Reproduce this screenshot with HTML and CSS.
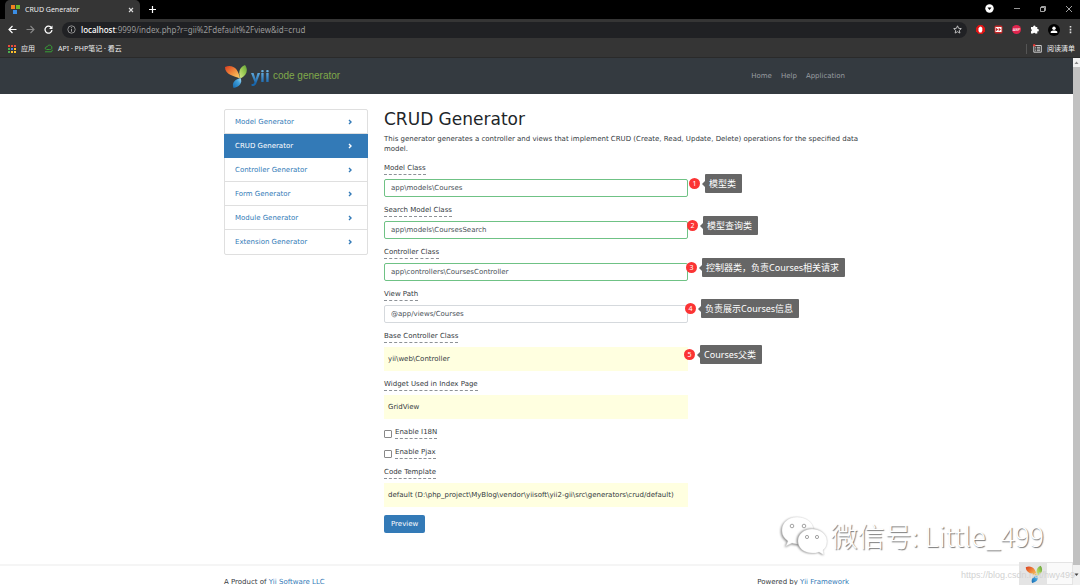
FILE: index.html
```
<!DOCTYPE html>
<html lang="zh-CN">
<head>
<meta charset="utf-8">
<title>CRUD Generator</title>
<link rel="stylesheet" href="styles.css">
</head>
<body>
<svg class="defs" aria-hidden="true">
  <defs>
    <linearGradient id="red" x1="0" y1="0" x2="1" y2="1"><stop offset="0" stop-color="#d93b1f"/><stop offset=".5" stop-color="#f08a3c"/><stop offset="1" stop-color="#fbd56b"/></linearGradient>
    <linearGradient id="green" x1="1" y1="0" x2="0" y2="1"><stop offset="0" stop-color="#5f9e35"/><stop offset=".5" stop-color="#9ccb55"/><stop offset="1" stop-color="#d8e88c"/></linearGradient>
    <linearGradient id="blue" x1="0" y1="1" x2="1" y2="0"><stop offset="0" stop-color="#1468ad"/><stop offset=".6" stop-color="#3f9fdb"/><stop offset="1" stop-color="#b5e2f5"/></linearGradient>
    <symbol id="leaf" viewBox="0 0 24 24">
      <path fill="url(#red)" d="M1 3C5 1 10 2 12.500 5.500c2 3 3 6 3.500 9C10 12 1 11 1 3z"/>
      <path fill="url(#green)" d="M21 1c3.500 5 2 10-4.500 13.500C14.500 10 14.500 3.500 21 1z"/>
      <path fill="url(#blue)" d="M16.500 14c2.500 5-1.500 9-7 10-2-5 1-8.500 7-10z"/>
    </symbol>
  </defs>
</svg>

<header class="browser">
  <div class="tabstrip">
    <div class="tab">
      <svg class="icon-sm" viewBox="0 0 9 9"><path fill="#f58220" d="M0 0h4v4H0z"/><path fill="#6fb92c" d="M5 0h4v4H5z"/><path fill="#3b8ee5" d="M2 5h4v4H2z"/></svg>
      <span class="tab-title">CRUD Generator</span>
      <button class="plain" aria-label="Close tab"><svg class="icon-xs" viewBox="0 0 6 6"><path d="M1 1l4 4M5 1L1 5" stroke="#ddd" stroke-width="1.1"/></svg></button>
    </div>
    <button class="plain new-tab" aria-label="New tab"><svg class="icon-sm" viewBox="0 0 9 9"><path d="M4.500 1v7M1 4.500h7" stroke="#fff" stroke-width="1.200"/></svg></button>
    <div class="window-buttons">
      <svg class="icon-sm" viewBox="0 0 9 9"><circle cx="4.500" cy="4.500" r="4.200" fill="#fff"/><path d="M2.500 3.500h4l-2 2.600z" fill="#000"/></svg>
      <button class="plain" aria-label="Minimize"><svg class="icon-xs" viewBox="0 0 6 6"><path d="M0 2.500h6" stroke="#bbb" stroke-width=".8"/></svg></button>
      <button class="plain" aria-label="Restore"><svg class="icon-xs" viewBox="0 0 6 6"><path d="M.5 1.500h4v4h-4zM1.500 1.500v-1h4v4h-1" fill="none" stroke="#ccc" stroke-width=".8"/></svg></button>
      <button class="plain" aria-label="Close"><svg class="icon-xs" viewBox="0 0 6 6"><path d="M0 0l6 6M6 0L0 6" stroke="#ccc" stroke-width=".8"/></svg></button>
    </div>
  </div>
  <div class="toolbar">
    <button class="plain" aria-label="Back"><svg class="icon-sm" viewBox="0 0 9 9"><path d="M8.500 4.500H1M4.500 1L1 4.500 4.500 8" fill="none" stroke="#fff" stroke-width="1.200"/></svg></button>
    <button class="plain" aria-label="Forward"><svg class="icon-sm" viewBox="0 0 9 9"><path d="M.5 4.500H8M4.500 1L8 4.500 4.500 8" fill="none" stroke="#888" stroke-width="1.100"/></svg></button>
    <button class="plain" aria-label="Reload"><svg class="icon-sm" viewBox="0 0 9 9"><path d="M7.500 2.800A3.500 3.500 0 1 0 8 5.200" fill="none" stroke="#fff" stroke-width="1.300"/><path d="M8.500.5v3.500H5z" fill="#fff"/></svg></button>
    <div class="address">
      <svg class="icon-sm" viewBox="0 0 9 9"><circle cx="4.500" cy="4.500" r="3.700" fill="none" stroke="#aaa" stroke-width=".8"/><path d="M4.500 4v2.700M4.500 2.200v1" stroke="#aaa" stroke-width=".9"/></svg>
      <span class="url"><b>localhost</b>:9999/index.php?r=gii%2Fdefault%2Fview&amp;id=crud</span>
      <svg class="icon-sm" viewBox="0 0 9 9"><path d="M4.500.8l1.100 2.500 2.700.3-2 1.800.6 2.700-2.400-1.400-2.400 1.400.6-2.700-2-1.800 2.700-.3z" fill="none" stroke="#ddd" stroke-width=".8"/></svg>
    </div>
    <div class="extensions">
      <svg class="icon-sm" viewBox="0 0 9 9"><path fill="#e11414" d="M2.700 0h3.600L9 2.700v3.600L6.300 9H2.700L0 6.300V2.700z"/><path fill="#fff" d="M2.500 3.500l1-1.500 1-.5 1 .5.800 1v2.500L5.500 7.500h-2L2.500 6z"/></svg>
      <svg class="icon-sm" viewBox="0 0 9 9"><rect x=".5" y=".5" width="8" height="8" rx="1.500" fill="#c62828"/><rect x="1.500" y="2" width="6" height="5" fill="#fff"/><path d="M2 2.800l2.300 1.700L2 6.200zM4.700 2.800L7 4.500 4.700 6.200z" fill="#c62828"/></svg>
      <span class="abp">ABP</span>
      <svg class="icon-sm" viewBox="0 0 9 9"><path fill="#fff" d="M1 2h2.200a1.200 1.200 0 1 1 2.300 0H7.300v2a1.200 1.200 0 1 1 0 2.300V8.500H5.200a1.100 1.100 0 0 0-2.100 0H1V6.200a1.100 1.100 0 0 0 0-2.100z"/></svg>
      <svg class="icon-md" viewBox="0 0 12 12"><circle cx="6" cy="6" r="6" fill="#000"/><circle cx="6" cy="4.200" r="1.700" fill="#fff"/><path fill="#fff" d="M2.700 9V8c0-2 6.600-2 6.600 0v1z"/></svg>
      <svg class="icon-dots" viewBox="0 0 3 9"><path fill="#ddd" d="M.7 1h1.600v1.600H.7zM.7 3.800h1.600v1.600H.7zM.7 6.600h1.600v1.600H.7z"/></svg>
    </div>
  </div>
  <nav class="bookmarks" aria-label="书签">
    <svg class="icon-sm" viewBox="0 0 9 9"><path fill="#e94b3c" d="M1 1h2v2H1zM4 1h2v2H4zM7 1h2v2H7z"/><path fill="#4caf50" d="M1 4h2v2H1z"/><path fill="#4285f4" d="M4 4h2v2H4z"/><path fill="#fbc02d" d="M7 4h2v2H7zM4 7h2v2H4zM7 7h2v2H7z"/><path fill="#4caf50" d="M1 7h2v2H1z"/></svg>
    <span class="apps">应用</span>
    <svg class="icon-sm" viewBox="0 0 9 9"><path d="M2.300 5.500C.5 5 1 2.700 3 3c.5-2.500 4.500-2.500 4.800 0 .6 2-1 2.800-2.300 2.500H2.500M1 7.800h6.500l1-2" fill="none" stroke="#38a038" stroke-width="1"/></svg>
    <span>API · PHP笔记 · 看云</span>
    <span class="reading">
      <svg class="icon-sm" viewBox="0 0 9 9"><path d="M.8 1.500h7.500v6.700H.8zM2.200 3.300h1M4 3.300h3M2.200 5h1M4 5h3M2.200 6.700h1M4 6.700h3" fill="none" stroke="#ddd" stroke-width=".9"/><circle cx="1.200" cy="1.200" r="1.200" fill="#e53935"/></svg>
      <span>阅读清单</span>
    </span>
  </nav>
</header>

<div class="viewport">
  <div class="page">
    <div class="navbar">
      <div class="container nav-inner">
        <div class="brand">
          <svg class="brand-leaf" viewBox="0 0 24 24"><use href="#leaf"/></svg>
          <span class="brand-yii">yii</span>
          <span class="brand-sub">code generator</span>
        </div>
        <nav class="menu"><a href="#">Home</a><a href="#">Help</a><a href="#">Application</a></nav>
      </div>
    </div>

    <div class="container content">
      <nav class="generators">
        <a href="#">Model Generator<svg viewBox="0 0 4 6"><path d="M1 1l2 2-2 2"/></svg></a>
        <a href="#" class="active">CRUD Generator<svg viewBox="0 0 4 6"><path d="M1 1l2 2-2 2"/></svg></a>
        <a href="#">Controller Generator<svg viewBox="0 0 4 6"><path d="M1 1l2 2-2 2"/></svg></a>
        <a href="#">Form Generator<svg viewBox="0 0 4 6"><path d="M1 1l2 2-2 2"/></svg></a>
        <a href="#">Module Generator<svg viewBox="0 0 4 6"><path d="M1 1l2 2-2 2"/></svg></a>
        <a href="#">Extension Generator<svg viewBox="0 0 4 6"><path d="M1 1l2 2-2 2"/></svg></a>
      </nav>

      <main class="main">
        <h1>CRUD Generator</h1>
        <p class="intro">This generator generates a controller and views that implement CRUD (Create, Read, Update, Delete) operations for the specified data model.</p>
        <form class="form">
          <div class="field">
            <label for="model">Model Class</label>
            <input id="model" class="text valid" type="text" value="app\models\Courses">
            <div class="note note-1"><span class="num">1</span><span class="tip">模型类</span></div>
          </div>
          <div class="field">
            <label for="search">Search Model Class</label>
            <input id="search" class="text valid" type="text" value="app\models\CoursesSearch">
            <div class="note note-2"><span class="num">2</span><span class="tip">模型查询类</span></div>
          </div>
          <div class="field">
            <label for="controller">Controller Class</label>
            <input id="controller" class="text valid" type="text" value="app\controllers\CoursesController">
            <div class="note note-3"><span class="num">3</span><span class="tip">控制器类，负责Courses相关请求</span></div>
          </div>
          <div class="field">
            <label for="views">View Path</label>
            <input id="views" class="text" type="text" value="@app/views/Courses">
            <div class="note note-4"><span class="num">4</span><span class="tip">负责展示Courses信息</span></div>
          </div>
          <div class="field">
            <label for="base">Base Controller Class</label>
            <output id="base" class="sticky">yii\web\Controller</output>
            <div class="note note-5"><span class="num">5</span><span class="tip">Courses父类</span></div>
          </div>
          <div class="field">
            <label for="widget">Widget Used in Index Page</label>
            <output id="widget" class="sticky">GridView</output>
          </div>
          <div class="check"><input id="i18n" type="checkbox"><label for="i18n">Enable I18N</label></div>
          <div class="check"><input id="pjax" type="checkbox"><label for="pjax">Enable Pjax</label></div>
          <div class="field">
            <label for="template">Code Template</label>
            <output id="template" class="sticky">default (D:\php_project\MyBlog\vendor\yiisoft\yii2-gii\src\generators\crud/default)</output>
          </div>
          <button type="button" class="preview">Preview</button>
        </form>
      </main>
    </div>

    <footer class="footer">
      <div class="container footer-inner">
        <span>A Product of <a href="#">Yii Software LLC</a></span>
        <span>Powered by <a href="#">Yii Framework</a></span>
      </div>
    </footer>

    <div class="debug"><span class="debug-logo"><svg viewBox="0 0 24 24"><use href="#leaf"/></svg></span></div>
    <div class="wechat">
      <svg viewBox="0 0 46 40">
        <g fill="#fff" stroke="#ddd" stroke-width=".4">
          <path class="bubble" d="M16 1C7 1 1 7 1 14c0 5 2 8 6 11l-2 5 6-3c3 1 6 1 9 1 9 0 14-7 13-14C32 6 25 1 16 1z"/>
          <path class="bubble front" d="M31 13c-8 0-14 5-14 12s6 12 14 12c3 0 5 0 7-1l5 3-1-5c3-2 4-5 4-9 0-7-7-12-15-12z"/>
        </g>
        <g fill="#fff" stroke="#999" stroke-width=".9"><circle cx="11" cy="10" r="1.800"/><circle cx="23" cy="10" r="1.800"/><circle cx="26" cy="21" r="1.600"/><circle cx="36" cy="21" r="1.600"/></g>
      </svg>
      <span>微信号: Little_499</span>
    </div>
    <div class="blog-mark">https://blog.csdn.net/hwy499</div>
  </div>
  <div class="scrollbar" aria-hidden="true">
    <svg viewBox="0 0 7 9"><path d="M1.500 6h4l-2-2.500z" fill="#888"/></svg>
    <div class="thumb"></div>
    <svg class="down" viewBox="0 0 7 9"><path d="M1.500 3.500h4l-2 2.500z" fill="#444"/></svg>
  </div>
</div>
</body>
</html>
```

FILE: styles.css
```
* { box-sizing: border-box; }

body {
  margin: 0;
  height: 100vh;
  display: flex;
  flex-direction: column;
  overflow: hidden;
  background: #fff;
  color: #343a40;
  font: 7px/10px "DejaVu Sans", "Noto Sans CJK SC", sans-serif;
}

a { color: #337ab7; text-decoration: none; }
svg { display: block; flex: none; }
.defs { position: absolute; width: 0; height: 0; }
.plain { padding: 0; border: 0; background: none; display: flex; }
.icon-xs { width: 6px; height: 6px; }
.icon-sm { width: 9px; height: 9px; }
.icon-md { width: 12px; height: 12px; }
.icon-dots { width: 3px; height: 9px; }

/* Browser frame */
.browser {
  background: #353535;
  color: #eee;
  font-family: "Noto Sans", "Noto Sans CJK SC", sans-serif;
  border-bottom: 1px solid #2a2a2a;
}
.tabstrip { display: flex; height: 19px; background: #000; align-items: center; }
.tab {
  display: flex;
  align-items: center;
  gap: 5px;
  width: 135px;
  height: 19px;
  margin-left: 5px;
  padding: 0 6px;
  border-radius: 5px 5px 0 0;
  background: #353535;
}
.tab-title { flex: 1; }
.new-tab { margin-left: 8px; }
.window-buttons { display: flex; align-items: center; gap: 20px; margin-left: auto; padding-right: 8px; padding-bottom: 2px; }
.toolbar { display: flex; align-items: center; height: 21px; padding: 0 8px; gap: 9px; }
.address {
  display: flex;
  align-items: center;
  flex: 1;
  gap: 5px;
  height: 16px;
  padding: 0 5px;
  border-radius: 8px;
  background: #202124;
  color: #9a9a9a;
  font-size: 8px;
}
.address b { color: #fff; font-weight: 500; }
.url { flex: 1; }
.extensions { display: flex; align-items: center; gap: 9px; }
.abp { border-radius: 5px; background: #e0244d; color: #fff; font-size: 4px; line-height: 9px; width: 9px; text-align: center; }
.bookmarks { display: flex; align-items: center; height: 17px; padding: 0 5px 0 7px; gap: 5px; }
.apps { margin-right: 4px; }
.reading { display: flex; align-items: center; gap: 5px; margin-left: auto; padding-left: 6px; border-left: 1px solid #555; }

/* Page */
.viewport { display: flex; flex: 1; min-height: 0; }
.page { position: relative; display: flex; flex-direction: column; flex: 1; min-width: 0; }
.container { width: 100%; max-width: 641px; margin: 0 auto; padding: 0 8px; }
.navbar { background: #343a40; }
.nav-inner { display: flex; align-items: center; justify-content: space-between; height: 36px; }
.brand { display: flex; align-items: center; }
.brand-leaf { width: 24px; height: 24px; margin-right: 3px; }
.brand-yii {
  margin-right: 3px;
  background: linear-gradient(#6bb4e4 30%, #1766ad 80%);
  background-clip: text;
  color: transparent;
  font: bold 16px/24px "Open Sans", sans-serif;
}
.brand-sub { color: #80a94a; font: 10px/26px "Liberation Sans", sans-serif; }
.menu { display: flex; gap: 9px; padding-right: 4px; }
.menu a { color: #999da0; }

.content { display: flex; align-items: flex-start; gap: 16px; padding-top: 15px; }
.generators { width: 144px; flex: none; border: 1px solid #dfdfdf; border-radius: 2px; }
.generators a {
  display: flex;
  align-items: center;
  justify-content: space-between;
  height: 24px;
  padding: 0 15px 0 10px;
  border-bottom: 1px solid #dfdfdf;
}
.generators a:last-child { border-bottom: 0; }
.generators .active { margin: 0 -1px; padding: 0 16px 0 11px; border-color: #337ab7; background: #337ab7; color: #fff; }
.generators svg { width: 4px; height: 6px; fill: none; stroke: currentColor; stroke-width: 1.4; }

.main { flex: 1; min-width: 0; }
h1 { margin: 0 0 5px; color: #212529; font-size: 17px; line-height: 20px; font-weight: 400; }
.intro { margin: 0 -16px 9px 0; }
.form { width: 304px; display: flex; flex-direction: column; align-items: flex-start; gap: 8px; }
.field { position: relative; width: 100%; display: flex; flex-direction: column; align-items: flex-start; gap: 4px; }
label { height: 12px; line-height: 10px; border-bottom: 1px dashed #8c9196; }
.text {
  width: 100%;
  height: 18px;
  padding: 0 6px;
  border: 1px solid #d5d9dd;
  border-radius: 2px;
  background: #fff;
  color: #495057;
  font: inherit;
}
.text.valid { border-color: #6fc285; }
.sticky { width: 100%; padding: 7px 4px; background: #ffffe0; }
.check { display: flex; align-items: center; gap: 3px; }
.check input {
  appearance: none;
  width: 8px;
  height: 8px;
  margin: 2px 0 0;
  border: 1px solid #888;
  border-radius: 1px;
  background: #fff;
}
.preview {
  height: 18px;
  padding: 0 7px;
  border: 0;
  border-radius: 2px;
  background: #337ab7;
  color: #fff;
  font: inherit;
}

/* Annotations over the form */
.note { position: absolute; top: 11px; display: flex; align-items: center; gap: 5px; white-space: nowrap; }
.note-1 { left: 305px; }
.note-2 { left: 303px; }
.note-3 { left: 302px; }
.note-4 { left: 301px; top: 10px; }
.note-5 { left: 300px; top: 14px; }
.num {
  width: 11px;
  border-radius: 50%;
  background: #fb3434;
  color: #fff;
  font: 7px/11px "Noto Sans", sans-serif;
  text-align: center;
}
.tip {
  position: relative;
  padding: 0 6px 0 4px;
  border-radius: 1px;
  background: #666;
  color: #fff;
  font: 9px/19px "Noto Sans", "Noto Sans CJK SC", sans-serif;
}
.tip::before {
  content: "";
  position: absolute;
  left: -3px;
  top: 7px;
  border: solid transparent;
  border-width: 3px 3px 3px 0;
  border-right-color: #666;
}

.footer { height: 21px; margin-top: auto; border-top: 2px solid #f5f5f5; overflow: hidden; }
.footer-inner { display: flex; justify-content: space-between; padding-top: 11px; }

/* Overlays */
.debug { position: absolute; right: 0; bottom: 0; width: 54px; height: 23px; border: 1px solid #e4e4e4; background: #fafafa; }
.debug-logo { display: flex; width: 27px; height: 22px; align-items: center; justify-content: center; background: #e4e4e4; }
.debug-logo svg { width: 18px; height: 18px; }
.wechat {
  position: absolute;
  right: 29px;
  bottom: 29px;
  display: flex;
  align-items: center;
  gap: 4px;
  color: #fff;
  font: 300 27px/40px "Noto Sans CJK SC", sans-serif;
  text-shadow: 1px 1px 1px #777;
}
.wechat svg { width: 46px; height: 40px; overflow: visible; }
.bubble { filter: drop-shadow(-1px 1px 1px #888); }
.bubble.front { filter: drop-shadow(-1px 0 1px #777); }
.blog-mark {
  position: absolute;
  right: -2px;
  bottom: 5px;
  color: #d2d2d2;
  font: 9px/10px "Liberation Sans", sans-serif;
}
.scrollbar { display: flex; flex-direction: column; width: 7px; background: #f1f1f1; }
.scrollbar svg { width: 7px; height: 9px; }
.thumb { flex: 1; background: #c1c1c1; }
.scrollbar .down { height: 9px; margin: 5px 0 6px; }
```
